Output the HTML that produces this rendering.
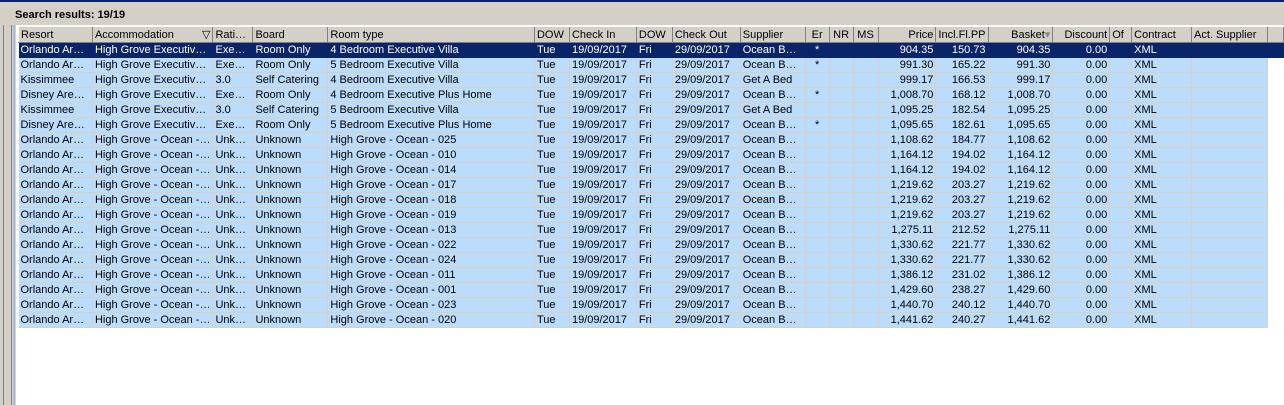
<!DOCTYPE html>
<html><head><meta charset="utf-8"><style>
body{margin:0;width:1284px;height:405px;overflow:hidden;background:#fff;font-family:"Liberation Sans",Tahoma,sans-serif;font-size:11px;position:relative}
.top{position:absolute;left:0;top:0;width:1284px;height:25px;background:#d4d0c8;border-top:2px solid #0a246a;box-sizing:border-box}
.title{position:absolute;left:15px;top:7px;font-weight:bold;font-size:11px;color:#000}
.left{position:absolute;left:0;top:25px;width:16px;height:380px;background:#d4d0c8}
.left .l1{position:absolute;left:3px;top:0;width:1px;height:380px;background:#808080}
.left .l2{position:absolute;left:11px;top:0;width:1px;height:380px;background:#808080}
.left .l3{position:absolute;left:13px;top:0;width:2px;height:380px;background:#a0c0e0}
table{position:absolute;left:18px;top:27px;border-collapse:collapse;table-layout:fixed}
td,th{height:14px;padding:0 2px;white-space:nowrap;overflow:hidden;font-weight:normal;text-align:left;line-height:14px}
th{height:15px;background:#d4d0c8;border-right:1px solid #808080;border-left:1px solid #fff;border-bottom:1px solid #808080}
td{background:#bcdcfc;border-right:1px solid #d8d0c0;border-bottom:1px solid #d8d0c0}
tr.sel td{background:#0a246a;color:#fff;border-color:#0a246a}
.r{text-align:right}
tr td:last-child{background:#fff;border:none}
tr.sel td:last-child{background:#0a246a}
</style></head><body>
<div class="top"><div class="title">Search results: 19/19</div></div>
<div class="left"><div class="l1"></div><div class="l2"></div><div class="l3"></div></div>
<table>
<colgroup><col style="width:74px"><col style="width:120px"><col style="width:40px"><col style="width:75px"><col style="width:207px"><col style="width:35px"><col style="width:67px"><col style="width:36px"><col style="width:68px"><col style="width:65px"><col style="width:24px"><col style="width:24px"><col style="width:25px"><col style="width:58px"><col style="width:52px"><col style="width:65px"><col style="width:57px"><col style="width:22px"><col style="width:60px"><col style="width:76px"><col style="width:16px"></colgroup>
<tr><th>Resort</th><th>Accommodation <span style="float:right">▽</span></th><th>Rati…</th><th>Board</th><th>Room type</th><th>DOW</th><th>Check In</th><th>DOW</th><th>Check Out</th><th>Supplier</th><th style="text-align:center">Er</th><th style="text-align:center">NR</th><th style="text-align:center">MS</th><th class="r">Price</th><th class="r">Incl.Fl.PP</th><th class="r">Basket<span style="color:#888">▾</span></th><th class="r">Discount</th><th>Of</th><th>Contract</th><th>Act. Supplier</th><th></th></tr>
<tr class="sel"><td>Orlando Ar…</td><td>High Grove Executiv…</td><td>Exe…</td><td>Room Only</td><td>4 Bedroom Executive Villa</td><td>Tue</td><td>19/09/2017</td><td>Fri</td><td>29/09/2017</td><td>Ocean B…</td><td style="text-align:center">*</td><td></td><td></td><td class="r">904.35</td><td class="r">150.73</td><td class="r">904.35</td><td class="r">0.00</td><td></td><td>XML</td><td></td><td></td></tr>
<tr><td>Orlando Ar…</td><td>High Grove Executiv…</td><td>Exe…</td><td>Room Only</td><td>5 Bedroom Executive Villa</td><td>Tue</td><td>19/09/2017</td><td>Fri</td><td>29/09/2017</td><td>Ocean B…</td><td style="text-align:center">*</td><td></td><td></td><td class="r">991.30</td><td class="r">165.22</td><td class="r">991.30</td><td class="r">0.00</td><td></td><td>XML</td><td></td><td></td></tr>
<tr><td>Kissimmee</td><td>High Grove Executiv…</td><td>3.0</td><td>Self Catering</td><td>4 Bedroom Executive Villa</td><td>Tue</td><td>19/09/2017</td><td>Fri</td><td>29/09/2017</td><td>Get A Bed</td><td></td><td></td><td></td><td class="r">999.17</td><td class="r">166.53</td><td class="r">999.17</td><td class="r">0.00</td><td></td><td>XML</td><td></td><td></td></tr>
<tr><td>Disney Are…</td><td>High Grove Executiv…</td><td>Exe…</td><td>Room Only</td><td>4 Bedroom Executive Plus Home</td><td>Tue</td><td>19/09/2017</td><td>Fri</td><td>29/09/2017</td><td>Ocean B…</td><td style="text-align:center">*</td><td></td><td></td><td class="r">1,008.70</td><td class="r">168.12</td><td class="r">1,008.70</td><td class="r">0.00</td><td></td><td>XML</td><td></td><td></td></tr>
<tr><td>Kissimmee</td><td>High Grove Executiv…</td><td>3.0</td><td>Self Catering</td><td>5 Bedroom Executive Villa</td><td>Tue</td><td>19/09/2017</td><td>Fri</td><td>29/09/2017</td><td>Get A Bed</td><td></td><td></td><td></td><td class="r">1,095.25</td><td class="r">182.54</td><td class="r">1,095.25</td><td class="r">0.00</td><td></td><td>XML</td><td></td><td></td></tr>
<tr><td>Disney Are…</td><td>High Grove Executiv…</td><td>Exe…</td><td>Room Only</td><td>5 Bedroom Executive Plus Home</td><td>Tue</td><td>19/09/2017</td><td>Fri</td><td>29/09/2017</td><td>Ocean B…</td><td style="text-align:center">*</td><td></td><td></td><td class="r">1,095.65</td><td class="r">182.61</td><td class="r">1,095.65</td><td class="r">0.00</td><td></td><td>XML</td><td></td><td></td></tr>
<tr><td>Orlando Ar…</td><td>High Grove - Ocean -…</td><td>Unk…</td><td>Unknown</td><td>High Grove - Ocean - 025</td><td>Tue</td><td>19/09/2017</td><td>Fri</td><td>29/09/2017</td><td>Ocean B…</td><td></td><td></td><td></td><td class="r">1,108.62</td><td class="r">184.77</td><td class="r">1,108.62</td><td class="r">0.00</td><td></td><td>XML</td><td></td><td></td></tr>
<tr><td>Orlando Ar…</td><td>High Grove - Ocean -…</td><td>Unk…</td><td>Unknown</td><td>High Grove - Ocean - 010</td><td>Tue</td><td>19/09/2017</td><td>Fri</td><td>29/09/2017</td><td>Ocean B…</td><td></td><td></td><td></td><td class="r">1,164.12</td><td class="r">194.02</td><td class="r">1,164.12</td><td class="r">0.00</td><td></td><td>XML</td><td></td><td></td></tr>
<tr><td>Orlando Ar…</td><td>High Grove - Ocean -…</td><td>Unk…</td><td>Unknown</td><td>High Grove - Ocean - 014</td><td>Tue</td><td>19/09/2017</td><td>Fri</td><td>29/09/2017</td><td>Ocean B…</td><td></td><td></td><td></td><td class="r">1,164.12</td><td class="r">194.02</td><td class="r">1,164.12</td><td class="r">0.00</td><td></td><td>XML</td><td></td><td></td></tr>
<tr><td>Orlando Ar…</td><td>High Grove - Ocean -…</td><td>Unk…</td><td>Unknown</td><td>High Grove - Ocean - 017</td><td>Tue</td><td>19/09/2017</td><td>Fri</td><td>29/09/2017</td><td>Ocean B…</td><td></td><td></td><td></td><td class="r">1,219.62</td><td class="r">203.27</td><td class="r">1,219.62</td><td class="r">0.00</td><td></td><td>XML</td><td></td><td></td></tr>
<tr><td>Orlando Ar…</td><td>High Grove - Ocean -…</td><td>Unk…</td><td>Unknown</td><td>High Grove - Ocean - 018</td><td>Tue</td><td>19/09/2017</td><td>Fri</td><td>29/09/2017</td><td>Ocean B…</td><td></td><td></td><td></td><td class="r">1,219.62</td><td class="r">203.27</td><td class="r">1,219.62</td><td class="r">0.00</td><td></td><td>XML</td><td></td><td></td></tr>
<tr><td>Orlando Ar…</td><td>High Grove - Ocean -…</td><td>Unk…</td><td>Unknown</td><td>High Grove - Ocean - 019</td><td>Tue</td><td>19/09/2017</td><td>Fri</td><td>29/09/2017</td><td>Ocean B…</td><td></td><td></td><td></td><td class="r">1,219.62</td><td class="r">203.27</td><td class="r">1,219.62</td><td class="r">0.00</td><td></td><td>XML</td><td></td><td></td></tr>
<tr><td>Orlando Ar…</td><td>High Grove - Ocean -…</td><td>Unk…</td><td>Unknown</td><td>High Grove - Ocean - 013</td><td>Tue</td><td>19/09/2017</td><td>Fri</td><td>29/09/2017</td><td>Ocean B…</td><td></td><td></td><td></td><td class="r">1,275.11</td><td class="r">212.52</td><td class="r">1,275.11</td><td class="r">0.00</td><td></td><td>XML</td><td></td><td></td></tr>
<tr><td>Orlando Ar…</td><td>High Grove - Ocean -…</td><td>Unk…</td><td>Unknown</td><td>High Grove - Ocean - 022</td><td>Tue</td><td>19/09/2017</td><td>Fri</td><td>29/09/2017</td><td>Ocean B…</td><td></td><td></td><td></td><td class="r">1,330.62</td><td class="r">221.77</td><td class="r">1,330.62</td><td class="r">0.00</td><td></td><td>XML</td><td></td><td></td></tr>
<tr><td>Orlando Ar…</td><td>High Grove - Ocean -…</td><td>Unk…</td><td>Unknown</td><td>High Grove - Ocean - 024</td><td>Tue</td><td>19/09/2017</td><td>Fri</td><td>29/09/2017</td><td>Ocean B…</td><td></td><td></td><td></td><td class="r">1,330.62</td><td class="r">221.77</td><td class="r">1,330.62</td><td class="r">0.00</td><td></td><td>XML</td><td></td><td></td></tr>
<tr><td>Orlando Ar…</td><td>High Grove - Ocean -…</td><td>Unk…</td><td>Unknown</td><td>High Grove - Ocean - 011</td><td>Tue</td><td>19/09/2017</td><td>Fri</td><td>29/09/2017</td><td>Ocean B…</td><td></td><td></td><td></td><td class="r">1,386.12</td><td class="r">231.02</td><td class="r">1,386.12</td><td class="r">0.00</td><td></td><td>XML</td><td></td><td></td></tr>
<tr><td>Orlando Ar…</td><td>High Grove - Ocean -…</td><td>Unk…</td><td>Unknown</td><td>High Grove - Ocean - 001</td><td>Tue</td><td>19/09/2017</td><td>Fri</td><td>29/09/2017</td><td>Ocean B…</td><td></td><td></td><td></td><td class="r">1,429.60</td><td class="r">238.27</td><td class="r">1,429.60</td><td class="r">0.00</td><td></td><td>XML</td><td></td><td></td></tr>
<tr><td>Orlando Ar…</td><td>High Grove - Ocean -…</td><td>Unk…</td><td>Unknown</td><td>High Grove - Ocean - 023</td><td>Tue</td><td>19/09/2017</td><td>Fri</td><td>29/09/2017</td><td>Ocean B…</td><td></td><td></td><td></td><td class="r">1,440.70</td><td class="r">240.12</td><td class="r">1,440.70</td><td class="r">0.00</td><td></td><td>XML</td><td></td><td></td></tr>
<tr><td>Orlando Ar…</td><td>High Grove - Ocean -…</td><td>Unk…</td><td>Unknown</td><td>High Grove - Ocean - 020</td><td>Tue</td><td>19/09/2017</td><td>Fri</td><td>29/09/2017</td><td>Ocean B…</td><td></td><td></td><td></td><td class="r">1,441.62</td><td class="r">240.27</td><td class="r">1,441.62</td><td class="r">0.00</td><td></td><td>XML</td><td></td><td></td></tr>
</table>
</body></html>
